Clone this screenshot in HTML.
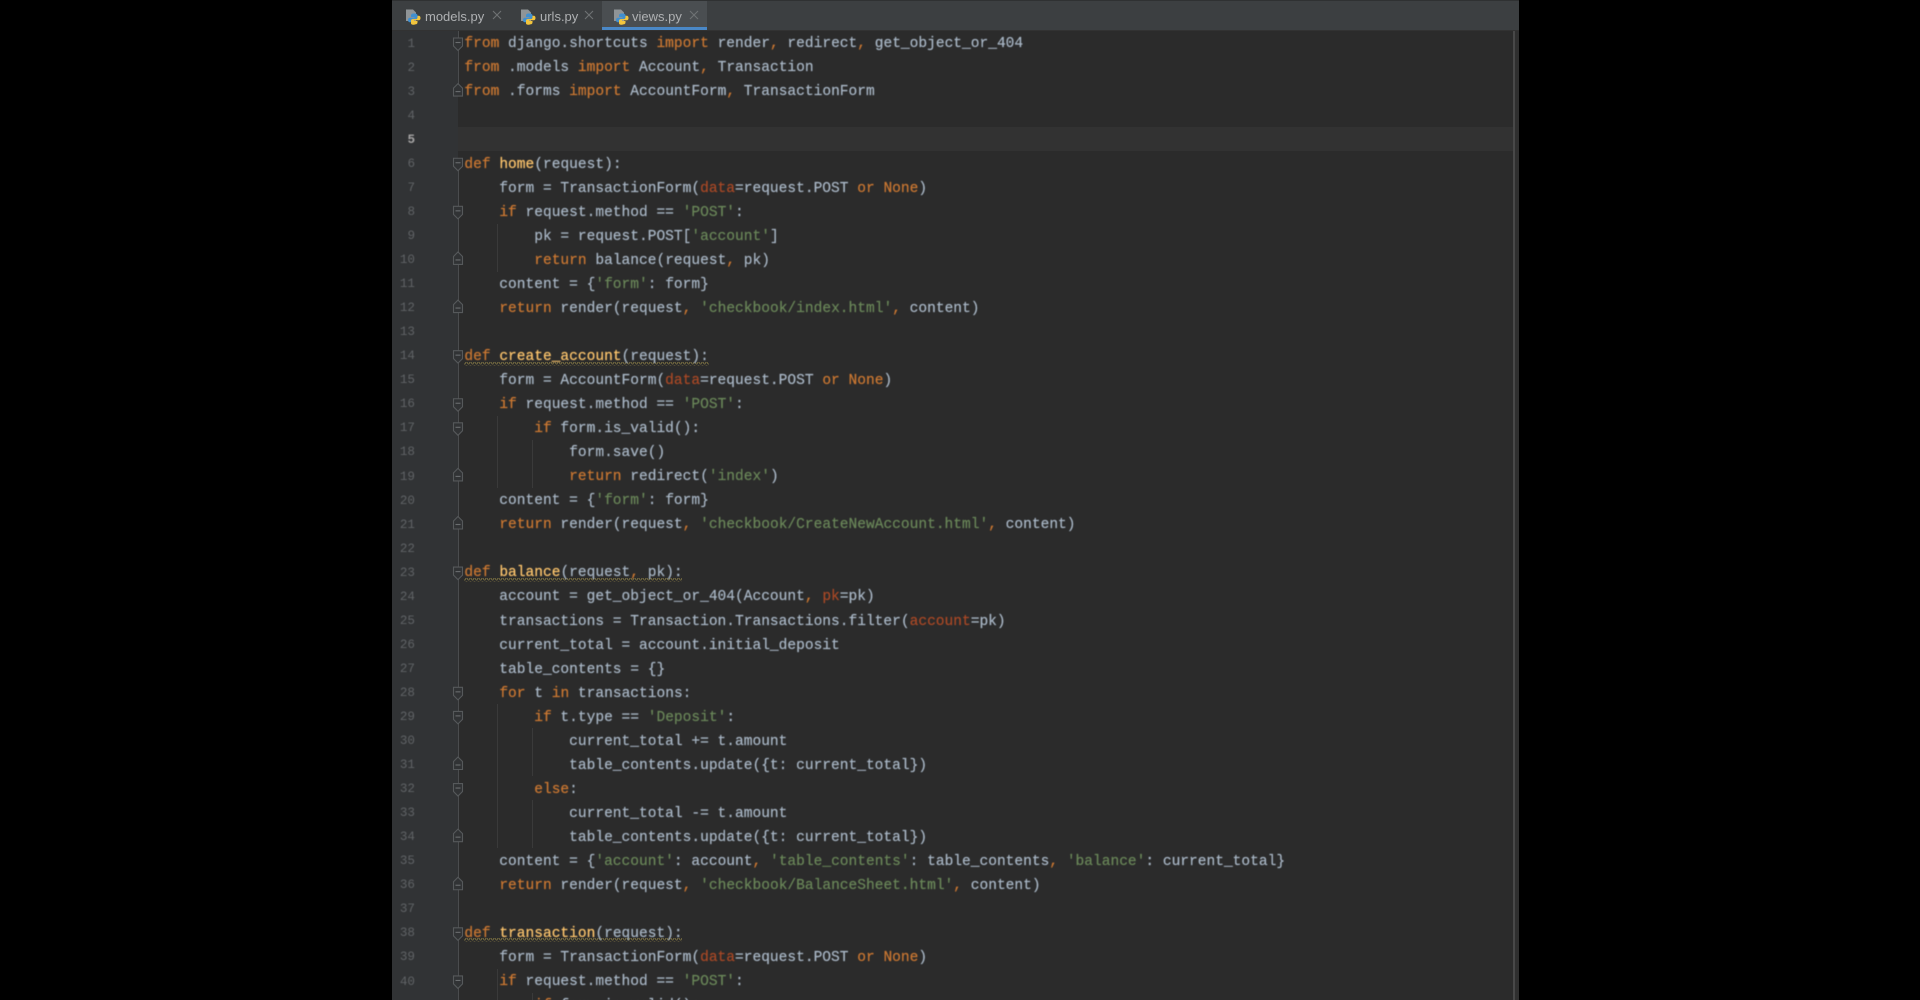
<!DOCTYPE html>
<html lang="en"><head><meta charset="utf-8"><title>views.py</title>
<style>
html,body{margin:0;padding:0;width:1920px;height:1000px;overflow:hidden;background:#000}
#p{position:absolute;left:392px;top:0;width:1127px;height:1000px;background:#2b2b2b;overflow:hidden}
#gut{position:absolute;left:0;top:31px;width:66px;height:969px;background:#313335}
#bar{position:absolute;left:0;top:0;width:1127px;height:30px;background:#3c3f41;border-top:1px solid #2f3132;box-sizing:border-box}
#sep{position:absolute;left:0;top:30px;width:1127px;height:1px;background:#323232}
#act{position:absolute;left:210px;top:1px;width:105px;height:26px;background:#4a4e51}
#und{position:absolute;left:210px;top:27px;width:105px;height:3px;background:#4a88c7}
.t{position:absolute;top:8px;font:13px/17px "Liberation Sans",sans-serif;color:#afb1b3;white-space:pre}
#cl{position:absolute;left:66px;top:127px;width:1055px;height:24px;background:#323232}
#sb{position:absolute;left:1121px;top:31px;width:2px;height:969px;background:#484848}
#sr{position:absolute;left:1123px;top:31px;width:4px;height:969px;background:#2f2f2f}
#nums,#code{position:absolute;font-family:"Liberation Mono",monospace;filter:blur(.4px)}
#nums{top:31.7px;left:0;width:23px;text-align:right;font-size:12.6px;line-height:24.05px;color:#606366}
#nums b{font-weight:bold;color:#a4a3a3}
#code{top:32.4px;left:72.4px;font-size:14.55px;line-height:24.05px;color:#a9b7c6;-webkit-text-stroke:.2px currentColor}
#nums div,#code div{height:24.05px;white-space:pre}
.k{color:#cc7832}.s{color:#6a8759}.p{color:#aa4926}.f{color:#ffc66d}
svg{position:absolute;left:0;top:0}
</style></head><body>
<div id="p">
<div id="gut"></div>
<div id="cl"></div>
<div id="bar"></div><div id="act"></div><div id="und"></div><div id="sep"></div>
<div id="sb"></div><div id="sr"></div>

<div class="t" style="left:33px">models.py</div>
<div class="t" style="left:148px">urls.py</div>
<div class="t" style="left:240px">views.py</div>

<svg width="1127" height="1000" viewBox="392 0 1127 1000" fill="none">
<defs>
<g id="py">
<path d="M0 1.5h7l3 3V13H0z" fill="#8f9497"/>
<path d="M8 5.5c-2.5 0-3 1-3 2.2V9h3.500v.7H3.800C2.500 9.700 2 10.800 2 12c0 1.300.6 2.300 1.800 2.300H5v-1.500c0-1.100.9-1.900 2-1.900h2.800c1 0 1.700-.7 1.700-1.700V7.500C11.500 6.200 10.300 5.500 8 5.500z" fill="#3f8fd0"/>
<path d="M8.500 16.500c2.500 0 3-1 3-2.200V13H8v-.7h4.700c1.300 0 1.800-1.100 1.800-2.300 0-1.300-.6-2.300-1.800-2.300h-1.200v1.500c0 1.100-.9 1.900-2 1.900H6.700c-1 0-1.700.7-1.700 1.700v2.400c0 1.300 1.200 1.500 3.500 1.500z" fill="#f2c53d"/>
</g>
<g id="x" stroke="#6f7274" stroke-width="1.100"><path d="M-4-4 4 4M4-4-4 4"/></g>
<g id="st"><path d="M453.500-5h9v8L458 7.500 453.500 3z" fill="#313335" stroke="#56595b" stroke-width="1.100"/><path d="M455.500-.5h5" stroke="#6a6d6f" stroke-width="1.100"/></g>
<g id="en"><path d="M453.500 5h9v-8L458-7.500 453.500-3z" fill="#313335" stroke="#56595b" stroke-width="1.100"/><path d="M455.500 .5h5" stroke="#6a6d6f" stroke-width="1.100"/></g>
<pattern id="sq" width="4" height="4" patternUnits="userSpaceOnUse" patternTransform="translate(0 1)"><path d="M0 3 1 3 2 1 3 1 4 3" stroke="#8a7d45" stroke-width=".7"/></pattern>
</defs>
<use href="#py" x="406" y="8"/><use href="#py" x="521" y="8"/><use href="#py" x="614" y="8"/>
<use href="#x" x="497" y="15"/><use href="#x" x="589" y="15"/><use href="#x" x="694" y="15"/>
<g stroke="#3a3a3a" stroke-width="1">
<path d="M497.500 224v48M497.500 416v72M532.500 440v48M497.500 704v144M532.500 728v48M532.500 800v48M497.500 969v31M532.500 993v7"/>
</g>
<path d="M458.500 31v60M458.500 163v837" stroke="#4a4c4e" stroke-width="1"/>
<use href="#st" y="43"/><use href="#en" y="91.100"/>
<use href="#st" y="163.250"/><use href="#st" y="211.350"/><use href="#en" y="259.450"/><use href="#en" y="307.550"/>
<use href="#st" y="355.650"/><use href="#st" y="403.750"/><use href="#st" y="427.800"/><use href="#en" y="475.900"/><use href="#en" y="524"/>
<use href="#st" y="572.100"/><use href="#st" y="692.350"/><use href="#st" y="716.400"/><use href="#en" y="764.500"/><use href="#st" y="788.550"/><use href="#en" y="836.650"/><use href="#en" y="884.750"/>
<use href="#st" y="932.850"/><use href="#st" y="980.950"/>
<rect x="464" y="362" width="245" height="4" fill="url(#sq)"/>
<rect x="464" y="578" width="218" height="4" fill="url(#sq)"/>
<rect x="464" y="938" width="218" height="4" fill="url(#sq)"/>
</svg>

<div id="nums"><div>1</div><div>2</div><div>3</div><div>4</div><div><b>5</b></div><div>6</div><div>7</div><div>8</div><div>9</div><div>10</div><div>11</div><div>12</div><div>13</div><div>14</div><div>15</div><div>16</div><div>17</div><div>18</div><div>19</div><div>20</div><div>21</div><div>22</div><div>23</div><div>24</div><div>25</div><div>26</div><div>27</div><div>28</div><div>29</div><div>30</div><div>31</div><div>32</div><div>33</div><div>34</div><div>35</div><div>36</div><div>37</div><div>38</div><div>39</div><div>40</div></div>

<div id="code"><div><span class="k">from</span> django.shortcuts <span class="k">import</span> render<span class="k">,</span> redirect<span class="k">,</span> get_object_or_404</div>
<div><span class="k">from</span> .models <span class="k">import</span> Account<span class="k">,</span> Transaction</div>
<div><span class="k">from</span> .forms <span class="k">import</span> AccountForm<span class="k">,</span> TransactionForm</div>
<div> </div>
<div> </div>
<div><span class="k">def</span> <span class="f">home</span>(request):</div>
<div>    form = TransactionForm(<span class="p">data</span>=request.POST <span class="k">or</span> <span class="k">None</span>)</div>
<div>    <span class="k">if</span> request.method == <span class="s">'POST'</span>:</div>
<div>        pk = request.POST[<span class="s">'account'</span>]</div>
<div>        <span class="k">return</span> balance(request<span class="k">,</span> pk)</div>
<div>    content = {<span class="s">'form'</span>: form}</div>
<div>    <span class="k">return</span> render(request<span class="k">,</span> <span class="s">'checkbook/index.html'</span><span class="k">,</span> content)</div>
<div> </div>
<div><span class="k">def</span> <span class="f">create_account</span>(request):</div>
<div>    form = AccountForm(<span class="p">data</span>=request.POST <span class="k">or</span> <span class="k">None</span>)</div>
<div>    <span class="k">if</span> request.method == <span class="s">'POST'</span>:</div>
<div>        <span class="k">if</span> form.is_valid():</div>
<div>            form.save()</div>
<div>            <span class="k">return</span> redirect(<span class="s">'index'</span>)</div>
<div>    content = {<span class="s">'form'</span>: form}</div>
<div>    <span class="k">return</span> render(request<span class="k">,</span> <span class="s">'checkbook/CreateNewAccount.html'</span><span class="k">,</span> content)</div>
<div> </div>
<div><span class="k">def</span> <span class="f">balance</span>(request<span class="k">,</span> pk):</div>
<div>    account = get_object_or_404(Account<span class="k">,</span> <span class="p">pk</span>=pk)</div>
<div>    transactions = Transaction.Transactions.filter(<span class="p">account</span>=pk)</div>
<div>    current_total = account.initial_deposit</div>
<div>    table_contents = {}</div>
<div>    <span class="k">for</span> t <span class="k">in</span> transactions:</div>
<div>        <span class="k">if</span> t.type == <span class="s">'Deposit'</span>:</div>
<div>            current_total += t.amount</div>
<div>            table_contents.update({t: current_total})</div>
<div>        <span class="k">else</span>:</div>
<div>            current_total -= t.amount</div>
<div>            table_contents.update({t: current_total})</div>
<div>    content = {<span class="s">'account'</span>: account<span class="k">,</span> <span class="s">'table_contents'</span>: table_contents<span class="k">,</span> <span class="s">'balance'</span>: current_total}</div>
<div>    <span class="k">return</span> render(request<span class="k">,</span> <span class="s">'checkbook/BalanceSheet.html'</span><span class="k">,</span> content)</div>
<div> </div>
<div><span class="k">def</span> <span class="f">transaction</span>(request):</div>
<div>    form = TransactionForm(<span class="p">data</span>=request.POST <span class="k">or</span> <span class="k">None</span>)</div>
<div>    <span class="k">if</span> request.method == <span class="s">'POST'</span>:</div>
<div>        <span class="k">if</span> form.is_valid():</div></div>
</div>
</body></html>
